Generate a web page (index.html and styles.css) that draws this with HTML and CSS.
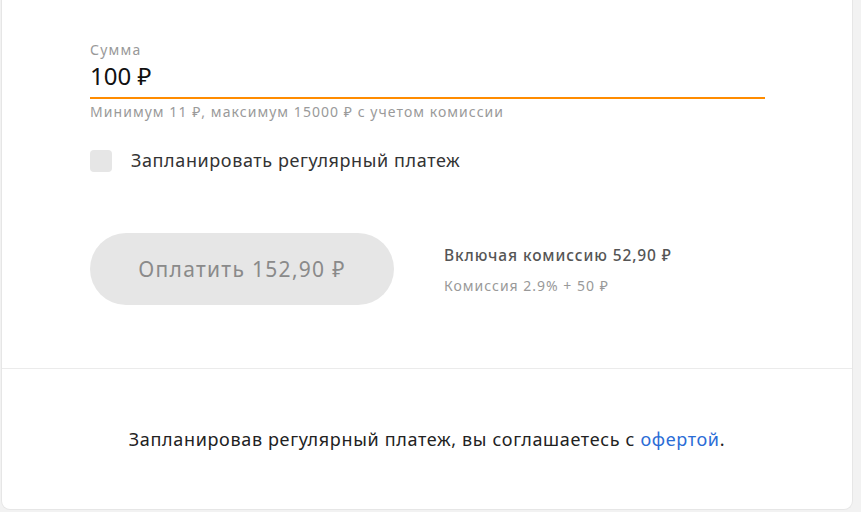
FILE: index.html
```html
<!DOCTYPE html>
<html lang="ru">
<head>
<meta charset="utf-8">
<title>Оплата</title>
<link rel="stylesheet" href="styles.css">
</head>
<body>
<div class="card">
  <section class="form">
    <div class="field">
      <div class="field-label">Сумма</div>
      <div class="field-value">100 ₽</div>
      <div class="field-line"></div>
      <div class="field-hint">Минимум 11 ₽, максимум 15000 ₽ с учетом комиссии</div>
    </div>
    <label class="check-row">
      <span class="checkbox"></span>
      <span class="check-text">Запланировать регулярный платеж</span>
    </label>
    <div class="pay-row">
      <button class="pay-btn" type="button">Оплатить 152,90 ₽</button>
      <div class="fee">
        <div class="fee-total">Включая комиссию 52,90 ₽</div>
        <div class="fee-rate">Комиссия 2.9% + 50 ₽</div>
      </div>
    </div>
  </section>
  <footer class="footer">
    <p class="footer-text">Запланировав регулярный платеж, вы соглашаетесь с <a class="link" href="#">офертой</a>.</p>
  </footer>
</div>
</body>
</html>
```
FILE: styles.css
```css
html, body {
  margin: 0;
  padding: 0;
  background: #f2f2f2;
}
body {
  padding: 0 8px 0 1px;
  font-family: "Noto Sans", "Open Sans", sans-serif;
  height: 512px;
  box-sizing: border-box;
  overflow: hidden;
}
.card {
  background: #fff;
  border: 1px solid #e6e6e6;
  border-top: none;
  border-radius: 0 0 9px 9px;
  height: 510px;
  box-sizing: border-box;
  display: flex;
  flex-direction: column;
}
.form {
  height: 369px;
  border-bottom: 1px solid #ebebeb;
  padding: 40px 0 0 88px;
  box-sizing: border-box;
}
.field {
  width: 675px;
}
.field-label {
  font-size: 14px;
  color: #999;
  line-height: 20px;
  letter-spacing: 1.2px;
}
.field-value {
  font-size: 24px;
  color: #111;
  line-height: 30px;
  margin-top: 1px;
}
.field-line {
  height: 2px;
  background: #ff8c00;
  margin-top: 6px;
}
.field-hint {
  font-size: 14px;
  color: #9a9a9a;
  line-height: 20px;
  margin-top: 3px;
  letter-spacing: 1.05px;
}
.check-row {
  display: flex;
  align-items: center;
  gap: 19px;
  margin-top: 28px;
}
.checkbox {
  width: 22px;
  height: 22px;
  border-radius: 4px;
  background: #e6e6e6;
  flex: none;
}
.check-text {
  font-size: 18px;
  color: #333;
  line-height: 22px;
  letter-spacing: 0.6px;
  position: relative;
  top: -1px;
}
.pay-row {
  display: flex;
  align-items: center;
  margin-top: 61px;
}
.pay-btn {
  width: 304px;
  height: 72px;
  border: none;
  border-radius: 36px;
  background: #e6e6e6;
  color: #8a8a8a;
  font-family: inherit;
  font-size: 21px;
  letter-spacing: 1.3px;
  padding: 0;
}
.fee {
  margin-left: 50px;
  margin-top: 2px;
}
.fee-total {
  font-size: 15.5px;
  font-weight: 500;
  color: #555;
  line-height: 20px;
  letter-spacing: 0.9px;
}
.fee-rate {
  font-size: 14px;
  color: #999;
  line-height: 20px;
  margin-top: 11px;
  letter-spacing: 1px;
}
.footer {
  flex: 1;
  display: flex;
  align-items: center;
  justify-content: center;
}
.footer-text {
  margin: 0;
  font-size: 18px;
  color: #222;
  letter-spacing: 0.65px;
  line-height: 24px;
}
.link {
  color: #2a6cd6;
  text-decoration: none;
}
```
